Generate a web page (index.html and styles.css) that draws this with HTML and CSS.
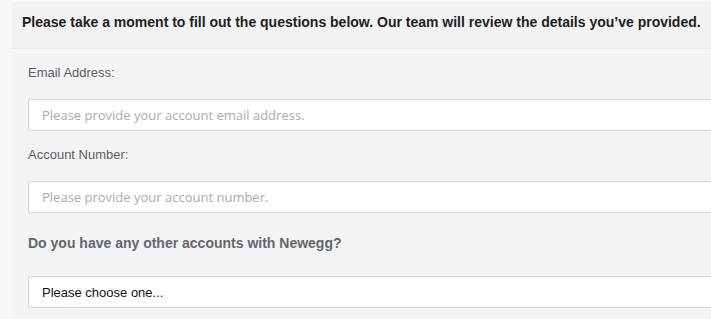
FILE: index.html
```html
<!DOCTYPE html>
<html lang="en">
<head>
    <meta charset="UTF-8">
    <meta name="viewport" content="width=device-width, initial-scale=1.0">
    <title>Account Review</title>
    <link rel="stylesheet" href="styles.css">
</head>
<body>

    <div class="panel">
        <div class="panel-header">
            Please take a moment to fill out the questions below. Our team will review the details you’ve provided.
        </div>

        <form class="panel-body">
            <label class="field-label" for="email">Email Address:</label>
            <input class="field-input" type="text" id="email" placeholder="Please provide your account email address.">

            <label class="field-label" for="account">Account Number:</label>
            <input class="field-input" type="text" id="account" placeholder="Please provide your account number.">

            <label class="question-label" for="other">Do you have any other accounts with Newegg?</label>
            <div class="field-select" id="other">Please choose one...</div>
        </form>
    </div>

</body>
</html>
```

FILE: styles.css
```css
* {
    margin: 0;
    padding: 0;
    box-sizing: border-box;
}

body {
    background-color: #f7f7f7;
    font-family: 'Liberation Sans', Arial, sans-serif;
    font-size: 14px;
    overflow: hidden;
}

.panel {
    margin: 2px 0 0 12px;
    background-color: #f3f4f6;
}

.panel-header {
    height: 47px;
    padding: 12px 10px 0;
    background-color: #f2f2f2;
    border-bottom: 1px solid #e7e8eb;
    color: #1e1e1e;
    font-weight: bold;
    font-size: 14px;
    line-height: 16px;
    white-space: nowrap;
}

.panel-body {
    display: flex;
    flex-direction: column;
    padding: 16px 0 20px 16px;
}

.field-label {
    color: #5e5e5e;
    font-size: 13px;
    line-height: 16px;
    margin-bottom: 18px;
}

.question-label {
    color: #666;
    font-weight: bold;
    font-size: 14px;
    line-height: 16px;
    margin-top: 6px;
    margin-bottom: 25px;
}

/* fields run off the right edge, so no right border */
.field-input,
.field-select {
    height: 32px;
    width: 100%;
    background-color: #fff;
    border: 1px solid #d6d6d6;
    border-right: none;
    border-radius: 3px 0 0 3px;
    padding: 0 13px;
    margin-bottom: 16px;
    outline: none;
}

.field-input {
    font-family: 'Open Sans', sans-serif;
    font-size: 13px;
    color: #333;
}

.field-input::placeholder {
    color: #aaa;
}

.field-select {
    display: flex;
    align-items: center;
    color: #111;
    font-size: 13px;
    margin-bottom: 0;
}
```
